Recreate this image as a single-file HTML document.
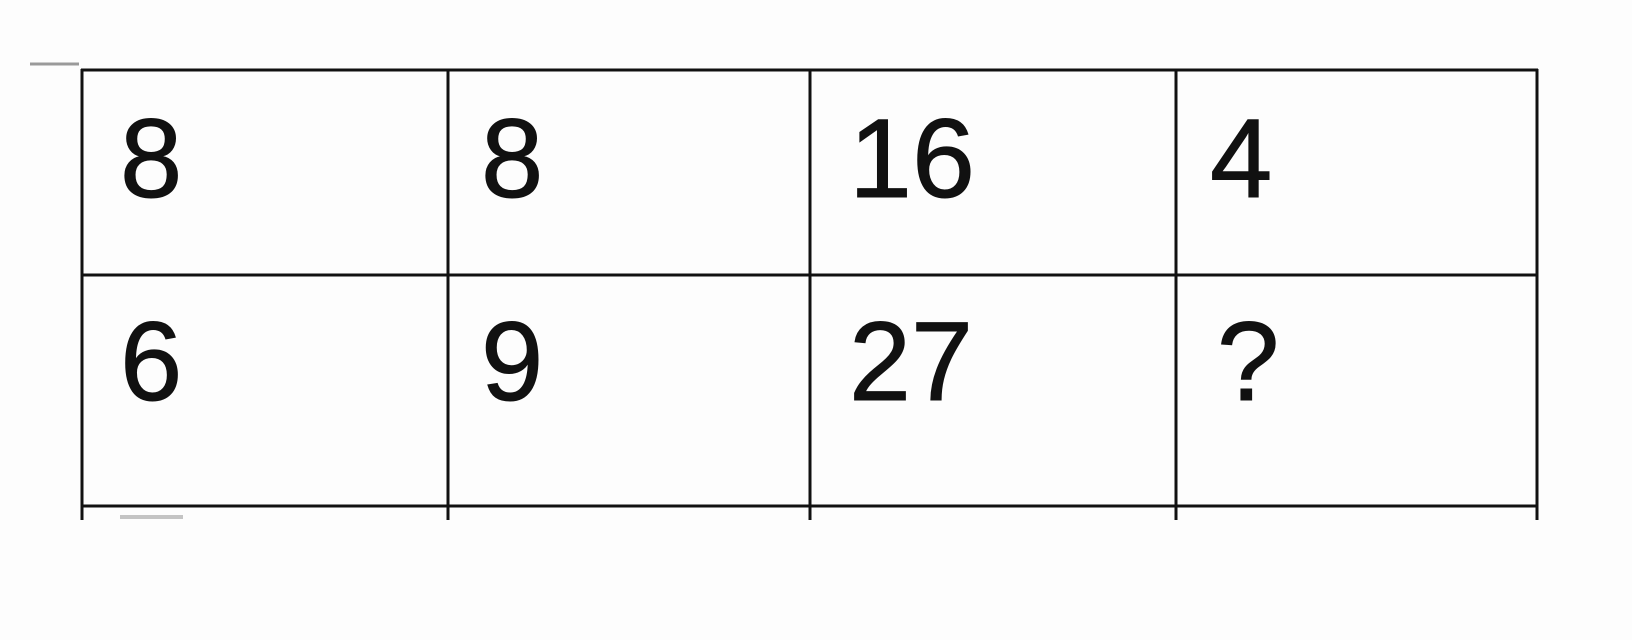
<!DOCTYPE html>
<html><head><meta charset="utf-8"><style>
html,body{margin:0;padding:0;background:#fdfdfd;}
svg{display:block}
</style></head><body>
<svg width="1632" height="640" viewBox="0 0 1632 640" xmlns="http://www.w3.org/2000/svg">
<rect width="1632" height="640" fill="#fdfdfd"/>
<line x1="30" y1="64" x2="79" y2="64" stroke="#9a9a9a" stroke-width="3"/>
<line x1="120" y1="517" x2="183" y2="517" stroke="#c4c4c4" stroke-width="4"/>
<g stroke="#111" stroke-width="3" fill="none">
<line x1="81" y1="70" x2="1538" y2="70"/>
<line x1="81" y1="275" x2="1538" y2="275"/>
<line x1="81" y1="506" x2="1538" y2="506"/>
<line x1="82" y1="69" x2="82" y2="520"/>
<line x1="448" y1="69" x2="448" y2="520"/>
<line x1="810" y1="69" x2="810" y2="520"/>
<line x1="1176" y1="69" x2="1176" y2="520"/>
<line x1="1537" y1="69" x2="1537" y2="520"/>
</g>
<g font-family="Liberation Sans, DejaVu Sans, sans-serif" font-size="112" fill="#111" stroke="#111" stroke-width="1">
<text x="120" y="197">8</text>
<text x="481" y="197">8</text>
<text x="849" y="197" textLength="126" lengthAdjust="spacingAndGlyphs">16</text>
<text x="1210" y="197">4</text>
<text x="120" y="400">6</text>
<text x="481" y="400">9</text>
<text x="849" y="400" textLength="124" lengthAdjust="spacingAndGlyphs">27</text>
<text x="1217" y="400">?</text>
</g>
</svg>
</body></html>
